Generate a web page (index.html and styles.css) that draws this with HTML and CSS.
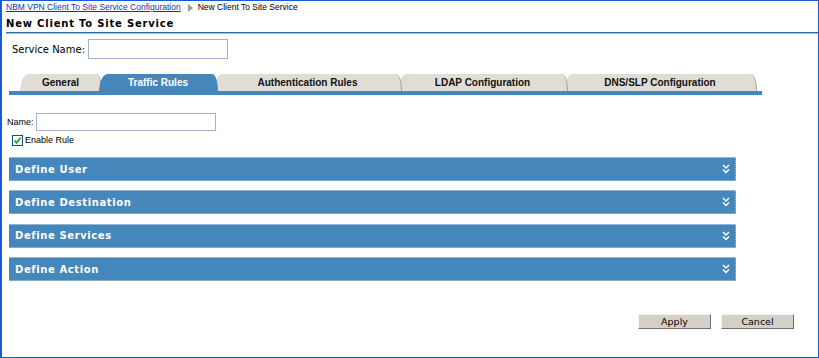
FILE: index.html
```html
<!DOCTYPE html>
<html lang="en">
<head>
    <meta charset="UTF-8">
    <title>New Client To Site Service</title>
    <link rel="stylesheet" href="styles.css">
</head>

<body>
    <div class="page">
        <!-- Breadcrumb -->
        <div class="crumbs">
            <a href="#">NBM VPN Client To Site Service Configuration</a>
            <span class="crumb-arrow"></span>
            <span>New Client To Site Service</span>
        </div>

        <h1 class="title">New Client To Site Service</h1>

        <div class="service-row">
            <label for="serviceName">Service Name:</label>
            <input type="text" id="serviceName">
        </div>

        <!-- Tabs -->
        <div class="tabs">
            <div class="tab tab-general">General</div>
            <div class="tab tab-traffic active">Traffic Rules</div>
            <div class="tab tab-auth">Authentication Rules</div>
            <div class="tab tab-ldap">LDAP Configuration</div>
            <div class="tab tab-dns">DNS/SLP Configuration</div>
        </div>

        <div class="tab-body">
            <div class="name-row">
                <label for="ruleName">Name:</label>
                <input type="text" id="ruleName">
            </div>
            <label class="check">
                <span class="box">
                    <svg width="9" height="9" viewBox="0 0 9 9"><path d="M1.5 4.5 L3.5 6.8 L7.6 1.8" fill="none" stroke="#21a32a" stroke-width="1.8"/></svg>
                </span>
                Enable Rule
            </label>

            <div class="sections">
                <div class="section">Define User
                    <svg class="chev" width="8" height="10" viewBox="0 0 8 10"><path d="M1 1 L4 4 L7 1 M1 5.5 L4 8.5 L7 5.5" fill="none" stroke="#fff" stroke-width="1.5"/></svg>
                </div>
                <div class="section">Define Destination
                    <svg class="chev" width="8" height="10" viewBox="0 0 8 10"><path d="M1 1 L4 4 L7 1 M1 5.5 L4 8.5 L7 5.5" fill="none" stroke="#fff" stroke-width="1.5"/></svg>
                </div>
                <div class="section">Define Services
                    <svg class="chev" width="8" height="10" viewBox="0 0 8 10"><path d="M1 1 L4 4 L7 1 M1 5.5 L4 8.5 L7 5.5" fill="none" stroke="#fff" stroke-width="1.5"/></svg>
                </div>
                <div class="section">Define Action
                    <svg class="chev" width="8" height="10" viewBox="0 0 8 10"><path d="M1 1 L4 4 L7 1 M1 5.5 L4 8.5 L7 5.5" fill="none" stroke="#fff" stroke-width="1.5"/></svg>
                </div>
            </div>
        </div>

        <div class="actions">
            <button type="button">Apply</button>
            <button type="button">Cancel</button>
        </div>
    </div>
</body>

</html>
```

FILE: styles.css
```css
/* General Styles */
html, body {
    margin: 0;
    padding: 0;
    background: #fff;
}

.page {
    box-sizing: border-box;
    height: 358px;
    border: 1px solid #1a5ad2;
    border-left-width: 2px;
    font-family: "Liberation Sans", Arial, sans-serif;
    color: #000;
}

/* Breadcrumb */
.crumbs {
    height: 13px;
    line-height: 13px;
    padding-left: 4px;
    font-size: 8.5px;
    display: flex;
    align-items: center;
}

.crumbs a {
    color: #1434a4;
    text-decoration: underline;
}

.crumb-arrow {
    display: inline-block;
    width: 0;
    height: 0;
    border-left: 5px solid #9a9a9a;
    border-top: 4px solid transparent;
    border-bottom: 4px solid transparent;
    margin: 0 5px 0 7px;
}

.title {
    margin: 1px 0 0 4px;
    height: 17px;
    line-height: 17px;
    font-family: "DejaVu Sans", Verdana, sans-serif;
    font-size: 10px;
    font-weight: bold;
    letter-spacing: 0.8px;
    border-bottom: 1px solid #2d6ca6;
    box-shadow: 0 1px 0 #9fc2de;
}

/* Service name */
.service-row {
    display: flex;
    align-items: center;
    gap: 3px;
    margin-top: 6px;
    padding-left: 10px;
    font-family: "DejaVu Sans", Verdana, sans-serif;
    font-size: 10px;
}

.service-row input {
    box-sizing: border-box;
    width: 140px;
    height: 20px;
    border: 1px solid #9db4cc;
    margin: 0;
}

/* Tabs */
.tabs {
    display: flex;
    margin: 15px 0 0 7px;
    padding-left: 11px;
    width: 742px;
    border-bottom: 4px solid #4687bb;
}

.tab {
    box-sizing: border-box;
    height: 17px;
    line-height: 17px;
    text-align: center;
    font-size: 10px;
    font-weight: bold;
    color: #111;
    background: #e0ddd6;
    border-right: 1px solid #9d9b95;
    border-radius: 9px 6px 0 0 / 17px 17px 0 0;
    position: relative;
    margin-left: -4px;
}

.tab-general { width: 82px; margin-left: 0; z-index: 5; }
.tab-traffic { width: 119px; margin-left: -3px; }
.tab-auth { width: 188px; z-index: 4; }
.tab-ldap { width: 170px; z-index: 3; }
.tab-dns { width: 193px; z-index: 2; }

.tab.active {
    background: #4687bb;
    color: #fff;
    border-right-color: #4687bb;
    z-index: 9;
}

/* Tab body */
.name-row {
    display: flex;
    align-items: center;
    gap: 2px;
    margin-top: 18px;
    padding-left: 5px;
    font-size: 9px;
}

.name-row input {
    box-sizing: border-box;
    width: 180px;
    height: 18px;
    border: 1px solid #9db4cc;
    margin: 0;
}

.check {
    display: flex;
    align-items: center;
    gap: 2px;
    margin-top: 3px;
    padding-left: 10px;
    height: 12px;
    font-size: 9px;
}

.box {
    box-sizing: border-box;
    width: 11px;
    height: 11px;
    border: 1px solid #1d4f7e;
    background: #fff;
    display: flex;
    align-items: center;
    justify-content: center;
}

.sections {
    display: flex;
    flex-direction: column;
    gap: 9.4px;
    margin: 11px 0 0 7px;
    width: 727px;
}

.section {
    box-sizing: border-box;
    height: 24px;
    display: flex;
    align-items: center;
    justify-content: space-between;
    padding: 0 5px 0 6px;
    background: #4587ba;
    border-top: 1px solid #8fb6d7;
    border-bottom: 1px solid #7faacd;
    border-right: 1px dotted #a8c8e2;
    color: #fff;
    font-family: "DejaVu Sans", Verdana, sans-serif;
    font-size: 10px;
    font-weight: bold;
    letter-spacing: 0.6px;
}

/* Buttons */
.actions {
    display: flex;
    justify-content: flex-end;
    gap: 10px;
    margin-top: 33px;
    padding-right: 24px;
}

.actions button {
    box-sizing: border-box;
    width: 73px;
    height: 15px;
    padding: 0;
    background: #d4d0c8;
    border: 1px solid;
    border-color: #f4f4f4 #707070 #707070 #f4f4f4;
    font-family: "DejaVu Sans", Verdana, sans-serif;
    font-size: 9.5px;
    line-height: 13px;
    color: #000;
    cursor: pointer;
}
```
